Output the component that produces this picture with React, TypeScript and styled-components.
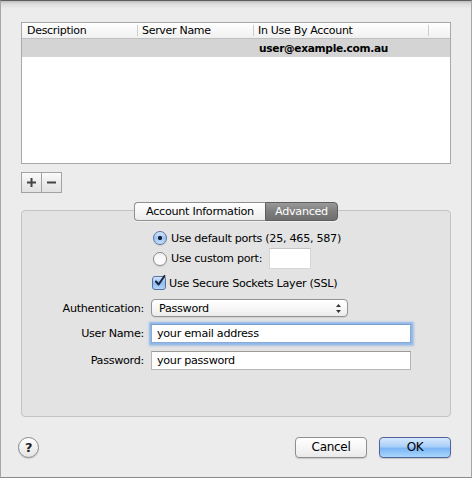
import styled, { createGlobalStyle } from 'styled-components';

const GlobalStyle = createGlobalStyle`
  html, body { margin: 0; padding: 0; }
  body {
    background: #ececec;
    font-family: "DejaVu Sans", "Liberation Sans", sans-serif;
    font-size: 11.2px;
    letter-spacing: -0.3px;
    color: #000;
  }
  button { font-family: inherit; font-size: inherit; color: inherit; letter-spacing: inherit; }
`;

const Window = styled.div`
  box-sizing: border-box;
  width: 472px;
  height: 478px;
  padding: 21px 20px 0;
  border: 1px solid #a6a6a6;
  border-top-color: #5e5e5e;
  border-bottom-color: #8a8a8a;
  background: linear-gradient(#bdbdbd, #dedede 3px, #ececec 8px);
  display: flex;
  flex-direction: column;
`;

// account table
const Table = styled.div`
  box-sizing: border-box;
  height: 142px;
  border: 1px solid #a9a9a9;
  background: #fff;
`;

const HeaderRow = styled.div`
  display: flex;
  height: 15px;
  border-bottom: 1px solid #c0c0c0;
  background: linear-gradient(#ffffff, #f0f0f0);
`;

const HeaderCell = styled.div<{ $w?: number; $pad?: number; $last?: boolean }>`
  box-sizing: border-box;
  ${(p) => (p.$w ? `width: ${p.$w}px;` : 'flex: 1;')}
  padding-left: ${(p) => p.$pad ?? 4}px;
  font-size: 11px;
  line-height: 15px;
  white-space: nowrap;
  background: ${(p) =>
    p.$last ? 'none' : 'linear-gradient(#cdcdcd, #cdcdcd) right 2px / 1px 11px no-repeat'};
`;

const DataRow = styled.div<{ $selected?: boolean }>`
  display: flex;
  height: 18px;
  background: ${(p) => (p.$selected ? '#d4d4d4' : 'transparent')};
`;

const DataCell = styled.div<{ $w?: number; $bold?: boolean }>`
  box-sizing: border-box;
  ${(p) => (p.$w ? `width: ${p.$w}px;` : 'flex: 1;')}
  padding-left: 5px;
  line-height: 18px;
  white-space: nowrap;
  font-weight: ${(p) => (p.$bold ? 700 : 400)};
  font-size: ${(p) => (p.$bold ? '10.6px' : 'inherit')};
`;

// + / - buttons
const AddRemove = styled.div`
  display: flex;
  align-self: flex-start;
  margin-top: 8px;
`;

const SquareButton = styled.button<{ $first?: boolean }>`
  box-sizing: border-box;
  width: ${(p) => (p.$first ? 21 : 20)}px;
  height: 21px;
  padding: 0;
  display: flex;
  align-items: center;
  justify-content: center;
  border: 1px solid #a2a2a2;
  border-left-width: ${(p) => (p.$first ? 1 : 0)}px;
  background: linear-gradient(#fbfbfb, #ececec 50%, #e2e2e2);
`;

// tab view
const Tabs = styled.div`
  display: flex;
  align-self: center;
  margin-top: 9px;
  margin-bottom: -11px;
  position: relative;
  z-index: 1;
`;

const Tab = styled.div<{ $active?: boolean; $w: number }>`
  box-sizing: border-box;
  width: ${(p) => p.$w}px;
  height: 19px;
  line-height: 17px;
  text-align: center;
  white-space: nowrap;
  border: 1px solid ${(p) => (p.$active ? '#5e5e5e' : '#8f8f8f')};
  border-radius: ${(p) => (p.$active ? '0 4px 4px 0' : '4px 0 0 4px')};
  border-right-width: ${(p) => (p.$active ? 1 : 0)}px;
  color: ${(p) => (p.$active ? '#fff' : '#000')};
  background: ${(p) =>
    p.$active
      ? 'linear-gradient(#9a9a9a, #7d7d7d 50%, #6f6f6f)'
      : 'linear-gradient(#ffffff, #f6f6f6 50%, #ececec)'};
  box-shadow: 0 1px 0 rgba(255, 255, 255, 0.5);
`;

const TabBox = styled.div`
  box-sizing: border-box;
  height: 207px;
  border: 1px solid #c4c4c4;
  border-radius: 4px;
  background: #e3e3e3;
  padding-top: 17px;
  display: flex;
  flex-direction: column;
`;

const Row = styled.div<{ $h: number; $mt?: number }>`
  display: flex;
  align-items: center;
  height: ${(p) => p.$h}px;
  margin-top: ${(p) => p.$mt ?? 0}px;
  white-space: nowrap;
`;

const Label = styled.div`
  flex-shrink: 0;
  width: 122px;
  margin-right: 7px;
  text-align: right;
`;

const Radio = styled.span<{ $on?: boolean }>`
  box-sizing: border-box;
  width: 14px;
  height: 14px;
  margin: 0 4px 0 2px;
  border-radius: 50%;
  border: 1px solid ${(p) => (p.$on ? '#57739f' : '#8a8a8a')};
  background: ${(p) =>
    p.$on
      ? 'radial-gradient(circle, #17233a 0 1.8px, transparent 2.4px), linear-gradient(#d6e7fb, #9cc3f0 50%, #c3dffc)'
      : 'linear-gradient(#f2f2f2, #fafafa 50%, #ffffff)'};
  box-shadow: 0 1px 1px rgba(0, 0, 0, 0.1);
`;

const Checkbox = styled.span`
  position: relative;
  box-sizing: border-box;
  width: 14px;
  height: 14px;
  margin: 0 3px 0 1px;
  border-radius: 3px;
  border: 1px solid #56719d;
  background: linear-gradient(#d3e5fb, #8fbbef 50%, #b3d5fa);
`;

const CheckMark = styled.svg`
  position: absolute;
  left: 1px;
  top: -2px;
`;

const PortField = styled.div`
  box-sizing: border-box;
  width: 42px;
  height: 21px;
  margin-left: 7px;
  background: #fff;
  border: 1px solid #d6d6d6;
  border-top-color: #c4c4c4;
`;

const Popup = styled.div`
  box-sizing: border-box;
  width: 197px;
  height: 18px;
  padding: 0 6px 0 7px;
  display: flex;
  align-items: center;
  justify-content: space-between;
  border: 1px solid #939393;
  border-radius: 4px;
  background: linear-gradient(#ffffff, #f7f7f7 50%, #ebebeb);
  box-shadow: 0 1px 1px rgba(0, 0, 0, 0.08);
`;

const TextField = styled.div<{ $focused?: boolean }>`
  box-sizing: border-box;
  width: 260px;
  height: 19px;
  padding-left: 5px;
  line-height: 17px;
  background: #fff;
  border: 1px solid ${(p) => (p.$focused ? '#8aa9d4' : '#b5b5b5')};
  border-top-color: ${(p) => (p.$focused ? '#7e9ecb' : '#9a9a9a')};
  box-shadow: ${(p) =>
    p.$focused ? '0 0 0 1.5px #8fb8ec, 0 0 2px 2.5px rgba(110, 160, 225, 0.55)' : 'none'};
`;

// footer
const Footer = styled.div`
  display: flex;
  align-items: center;
  height: 21px;
  margin-top: 20px;
  margin-left: -3px;
  gap: 12px;
`;

const HelpButton = styled.button`
  box-sizing: border-box;
  width: 21px;
  height: 21px;
  padding: 0;
  margin-right: auto;
  border-radius: 50%;
  border: 1px solid #8a8a8a;
  background: linear-gradient(#ffffff, #f1f1f1 50%, #e4e4e4);
  box-shadow: 0 1px 1px rgba(0, 0, 0, 0.15);
  font-weight: 700;
  font-size: 13px;
  line-height: 19px;
  color: #222;
`;

const PushButton = styled.button<{ $default?: boolean }>`
  box-sizing: border-box;
  width: 72px;
  height: 21px;
  padding: 0;
  border-radius: 4px;
  border: 1px solid ${(p) => (p.$default ? '#51629a' : '#8f8f8f')};
  background: ${(p) =>
    p.$default
      ? 'linear-gradient(#d6e9fd, #a9cff9 45%, #7cb6f5 55%, #a8d6fc)'
      : 'linear-gradient(#ffffff, #f6f6f6 50%, #e9e9e9)'};
  box-shadow: 0 1px 1px rgba(0, 0, 0, 0.15);
  font-size: 12px;
  line-height: 19px;
`;

export default function App() {
  return (
    <>
      <GlobalStyle />
      <Window>
        <Table>
          <HeaderRow>
            <HeaderCell $w={116} $pad={5}>
              Description
            </HeaderCell>
            <HeaderCell $w={116}>Server Name</HeaderCell>
            <HeaderCell $w={175}>In Use By Account</HeaderCell>
            <HeaderCell $last />
          </HeaderRow>
          <DataRow $selected>
            <DataCell $w={116} />
            <DataCell $w={116} />
            <DataCell $w={175} $bold>
              user@example.com.au
            </DataCell>
            <DataCell />
          </DataRow>
        </Table>

        <AddRemove>
          <SquareButton $first title="Add">
            <svg width="9" height="9" viewBox="0 0 9 9">
              <path d="M3.5 0h2v3.5H9v2H5.5V9h-2V5.5H0v-2h3.5z" fill="#444" />
            </svg>
          </SquareButton>
          <SquareButton title="Remove">
            <svg width="9" height="9" viewBox="0 0 9 9">
              <path d="M0 3.5h9v2H0z" fill="#444" />
            </svg>
          </SquareButton>
        </AddRemove>

        <Tabs>
          <Tab $w={131}>Account Information</Tab>
          <Tab $w={73} $active>
            Advanced
          </Tab>
        </Tabs>

        <TabBox>
          <Row $h={20}>
            <Label />
            <Radio $on />
            Use default ports (25, 465, 587)
          </Row>
          <Row $h={21}>
            <Label />
            <Radio />
            Use custom port:
            <PortField />
          </Row>
          <Row $h={18} $mt={5}>
            <Label />
            <Checkbox>
              <CheckMark width="12" height="12" viewBox="0 0 12 12">
                <path
                  d="M2 6.5l2.6 3L10.5 1"
                  fill="none"
                  stroke="#1a2340"
                  strokeWidth="2"
                  strokeLinecap="round"
                  strokeLinejoin="round"
                />
              </CheckMark>
            </Checkbox>
            Use Secure Sockets Layer (SSL)
          </Row>
          <Row $h={18} $mt={7}>
            <Label>Authentication:</Label>
            <Popup>
              Password
              <svg width="5" height="9" viewBox="0 0 5 9">
                <path d="M2.5 0L5 3H0zM0 6h5L2.5 9z" fill="#333" />
              </svg>
            </Popup>
          </Row>
          <Row $h={19} $mt={7}>
            <Label>User Name:</Label>
            <TextField $focused>your email address</TextField>
          </Row>
          <Row $h={19} $mt={8}>
            <Label>Password:</Label>
            <TextField>your password</TextField>
          </Row>
        </TabBox>

        <Footer>
          <HelpButton title="Help">?</HelpButton>
          <PushButton>Cancel</PushButton>
          <PushButton $default>OK</PushButton>
        </Footer>
      </Window>
    </>
  );
}
